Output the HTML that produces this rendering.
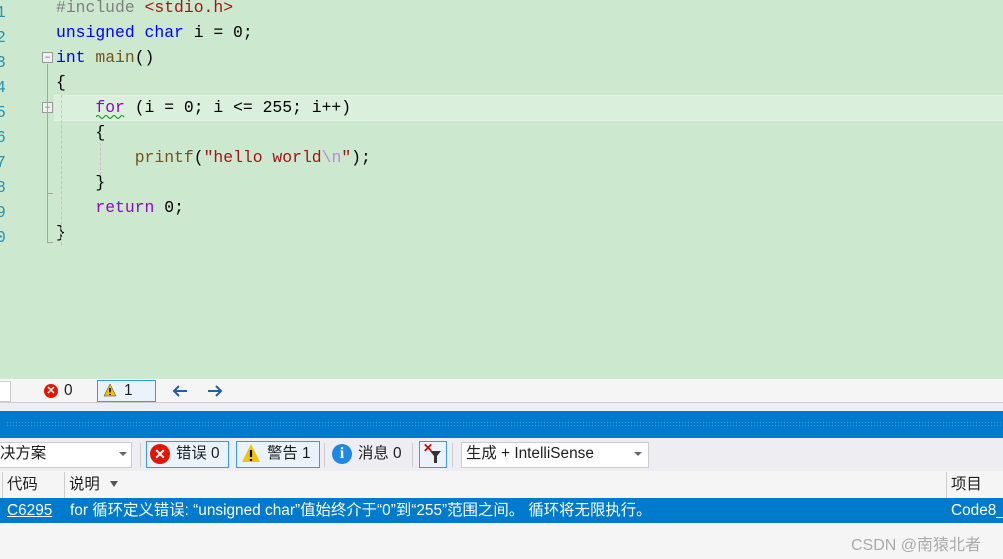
<!DOCTYPE html><html><head><style>
body{margin:0;width:1003px;height:559px;overflow:hidden;position:relative;font-family:"Liberation Sans","Noto Sans CJK SC",sans-serif;background:#f5f5f5}
.a{position:absolute}
.code{background:#cce8cf;left:0;top:0;width:1003px;height:379px}
.ln{font-family:"Liberation Mono",monospace;font-size:16.4px;color:#2b91af;left:-4px}
.c{font-family:"Liberation Mono","Noto Sans CJK SC",monospace;font-size:16.4px;white-space:pre;line-height:25px;left:56px;color:#000}
.k{color:#0000ff}.p{color:#8f08c4}.s{color:#a31515}.g{color:#808080}.f{color:#74531f}.e{color:#9b9b9b}
.t{font-size:15.4px;color:#1e1e1e;line-height:18px}
.box{border:1px solid #3399ff;background:#eaf3fc;position:absolute}
</style></head><body>
<div class="a code"></div>
<div class="a" style="left:54px;top:95px;width:949px;height:24px;background:#dbefdd;border-top:1px solid #e4f2e5;border-bottom:1px solid #e4f2e5"></div>
<div class="a ln" style="top:0;line-height:25px;white-space:pre">1
2
3
4
5
6
7
8
9
0</div>
<div class="a c" style="top:-5px"><span class="g">#include </span><span class="s">&lt;stdio.h&gt;</span>
<span class="k">unsigned char</span> i = 0;
<span class="k">int</span> <span class="f">main</span>()
{
    <span class="p">for</span> (i = 0; i &lt;= 255; i++)
    {
        <span class="f">printf</span>(<span class="s">"hello world</span><span style="color:#b88be0">\n</span><span class="s">"</span>);
    }
    <span class="p">return</span> 0;
}</div>
<svg class="a" style="left:96px;top:114px" width="32" height="6"><path d="M0 3 Q2 0 4 3 T8 3 T12 3 T16 3 T20 3 T24 3 T28 3" stroke="#2a9d2a" fill="none" stroke-width="1.2"/></svg>
<div class="a" style="left:42px;top:52px;width:9px;height:9px;border:1px solid #999;background:#f0f0f0;font-size:9px;line-height:8px;text-align:center;color:#555">−</div>
<div class="a" style="left:42px;top:102px;width:9px;height:9px;border:1px solid #999;background:#f0f0f0;font-size:9px;line-height:8px;text-align:center;color:#555">−</div>
<div class="a" style="left:47px;top:64px;width:1px;height:179px;background:#a5a5a5"></div>
<div class="a" style="left:47px;top:242px;width:6px;height:1px;background:#a5a5a5"></div>
<div class="a" style="left:47px;top:193px;width:6px;height:1px;background:#a5a5a5"></div>
<div class="a" style="left:61px;top:95px;width:0;height:150px;border-left:1px dashed #d8b8c8"></div>
<div class="a" style="left:100px;top:143px;width:0;height:32px;border-left:1px dashed #d8b8c8"></div>
<!-- status toolbar -->
<div class="a" style="left:0;top:379px;width:1003px;height:23px;background:#f5f5f5;border-bottom:1px solid #ccc"></div>
<div class="a" style="left:0;top:381px;width:10px;height:19px;background:#fff;border:1px solid #ccc;border-left:none"></div>
<div class="a" style="left:44px;top:384px;width:14px;height:14px;border-radius:50%;background:#e51400;color:#fff;font-size:11px;line-height:14px;text-align:center;font-weight:bold">✕</div>
<div class="a t" style="left:64px;top:382px">0</div>
<div class="box" style="left:97px;top:380px;width:57px;height:20px"></div>
<svg class="a" style="left:103px;top:383px" width="14" height="14"><path d="M7 1 L13 13 H1Z" fill="#f5c400" stroke="#333" stroke-width=".5"/><path d="M7 5V9.5M7 11v1" stroke="#000" stroke-width="1.6"/></svg>
<div class="a t" style="left:124px;top:382px">1</div>
<svg class="a" style="left:172px;top:384px" width="16" height="14"><path d="M15 7H2M7 2L2 7L7 12" stroke="#1e5fa8" stroke-width="2" fill="none"/></svg>
<svg class="a" style="left:207px;top:384px" width="16" height="14"><path d="M1 7H14M9 2L14 7L9 12" stroke="#1e5fa8" stroke-width="2" fill="none"/></svg>
<div class="a" style="left:0;top:403px;width:1003px;height:8px;background:#eeeef2"></div>
<div class="a" style="left:0;top:411px;width:1003px;height:27px;background:#007acc"></div>
<div class="a" style="left:6px;top:421px;width:997px;height:5px;background-image:radial-gradient(#3f9ad8 0.6px,transparent 0.8px);background-size:3px 3px"></div>
<!-- error list toolbar -->
<div class="a" style="left:0;top:438px;width:1003px;height:33px;background:#eeeef2"></div>
<div class="a" style="left:0;top:442px;width:131px;height:24px;background:#fff;border:1px solid #ccc;border-left:none"></div>
<div class="a t" style="left:0;top:445px">决方案</div>
<div class="a" style="left:119px;top:452px;border:4px solid transparent;border-top:4px solid #666"></div>
<div class="a" style="left:140px;top:443px;width:1px;height:24px;background:#ccc"></div>
<div class="box" style="left:146px;top:441px;width:81px;height:25px"></div>
<div class="a" style="left:150px;top:444px;width:20px;height:20px;border-radius:50%;background:#e51400;color:#fff;font-size:14px;line-height:20px;text-align:center;font-weight:bold">✕</div>
<div class="a t" style="left:176px;top:445px">错误 0</div>
<div class="box" style="left:236px;top:441px;width:82px;height:25px"></div>
<svg class="a" style="left:241px;top:443px" width="20" height="20"><path d="M10 1 L19 19 H1Z" fill="#f5c400"/><path d="M10 7V14M10 16v2" stroke="#000" stroke-width="2.2"/></svg>
<div class="a t" style="left:267px;top:445px">警告 1</div>
<div class="a" style="left:324px;top:443px;width:1px;height:24px;background:#ccc"></div>
<div class="a" style="left:332px;top:444px;width:20px;height:20px;border-radius:50%;background:#1e88e5;color:#fff;font-size:16px;line-height:20px;text-align:center;font-weight:bold;font-family:'Liberation Serif',serif">i</div>
<div class="a t" style="left:358px;top:445px">消息 0</div>
<div class="a" style="left:412px;top:443px;width:1px;height:24px;background:#ccc"></div>
<div class="box" style="left:419px;top:441px;width:26px;height:25px"></div>
<div class="a" style="left:423px;top:441px;color:#c00;font-size:12px;font-weight:bold">✕</div>
<svg class="a" style="left:430px;top:451px" width="12" height="12"><path d="M0 0H11L7 5V12H4V5Z" fill="#333"/></svg>
<div class="a" style="left:452px;top:443px;width:1px;height:24px;background:#ccc"></div>
<div class="a" style="left:461px;top:442px;width:186px;height:24px;background:#fff;border:1px solid #ccc"></div>
<div class="a t" style="left:466px;top:445px">生成 + IntelliSense</div>
<div class="a" style="left:634px;top:452px;border:4px solid transparent;border-top:4px solid #666"></div>
<!-- header -->
<div class="a" style="left:0;top:471px;width:1003px;height:27px;background:#f5f5f5"></div>
<div class="a" style="left:2px;top:472px;width:1px;height:26px;background:#ccc"></div>
<div class="a" style="left:64px;top:472px;width:1px;height:26px;background:#ccc"></div>
<div class="a" style="left:946px;top:472px;width:1px;height:26px;background:#ccc"></div>
<div class="a t" style="left:7px;top:476px">代码</div>
<div class="a t" style="left:69px;top:476px">说明</div>
<div class="a" style="left:110px;top:481px;border:4px solid transparent;border-top:6px solid #555"></div>
<div class="a t" style="left:951px;top:476px">项目</div>
<div class="a" style="left:0;top:498px;width:1003px;height:25px;background:#007acc"></div>
<div class="a t" style="left:7px;top:502px;color:#fff;text-decoration:underline">C6295</div>
<div class="a t" style="left:70px;top:502px;color:#fff;white-space:nowrap">for 循环定义错误: “unsigned char”值始终介于“0”到“255”范围之间。 循环将无限执行。</div>
<div class="a t" style="left:951px;top:502px;color:#fff">Code8_</div>
<div class="a" style="left:851px;top:531px;font-size:16px;color:#aaa">CSDN @南猿北者</div>
</body></html>
